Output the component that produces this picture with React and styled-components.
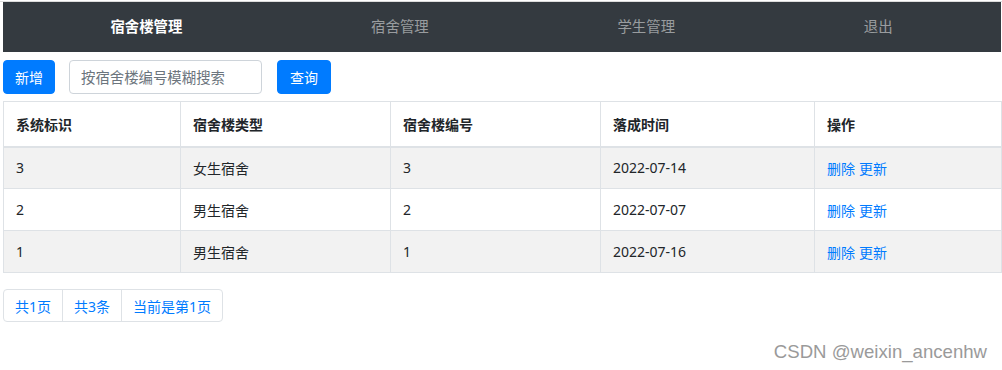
import React from "react";
import styled, { createGlobalStyle } from "styled-components";

const Global = createGlobalStyle`
  html, body { margin: 0; padding: 0; background: #fff; }
  body {
    font-family: "Noto Sans", "Noto Sans CJK SC", sans-serif;
    font-size: 14px;
    color: #212529;
  }
  * { box-sizing: border-box; }
`;

const Page = styled.div`
  position: relative;
  height: 370px;
  margin-top: 1px;
  border-top: 1px solid #dcdcdc;
  padding: 0 1px 0 3px;
`;

const Nav = styled.nav`
  height: 50px;
  background: #343a40;
  display: flex;
  align-items: center;
  justify-content: space-around;
  padding: 0 14px 0 13px;
`;

const NavItem = styled.a`
  font-size: 14.4px;
  line-height: 20px;
  color: ${(p) => (p.$active ? "#ffffff" : "rgba(255,255,255,0.5)")};
  font-weight: ${(p) => (p.$active ? 700 : 400)};
  text-decoration: none;
  white-space: nowrap;
`;

const Toolbar = styled.div`
  display: flex;
  align-items: center;
  margin-top: 8px;
  height: 34px;
`;

const Button = styled.button`
  height: 34px;
  padding: 0 ${(p) => p.$px || 11}px;
  border: 1px solid #007bff;
  background: #007bff;
  color: #fff;
  border-radius: 4px;
  font-family: inherit;
  font-size: 14px;
  margin-left: ${(p) => p.$ml || 0}px;
`;

const SearchInput = styled.input`
  width: 193px;
  height: 34px;
  margin-left: 14px;
  padding: 0 11px;
  border: 1px solid #ced4da;
  border-radius: 4px;
  font-family: inherit;
  font-size: 14.4px;
  color: #495057;
  &::placeholder { color: #6c757d; }
`;

const Table = styled.table`
  width: 998px;
  margin-top: 7px;
  border-collapse: collapse;
  table-layout: fixed;
`;

const Th = styled.th`
  text-align: left;
  font-weight: 700;
  height: 45px;
  padding: 0 12px;
  border: 1px solid #dee2e6;
  border-bottom: 2px solid #dee2e6;
  vertical-align: middle;
  font-size: 14px;
`;

const Tr = styled.tr`
  background: ${(p) => (p.$striped ? "#f2f2f2" : "#fff")};
`;

const Td = styled.td`
  height: 42px;
  padding: 0 12px;
  border: 1px solid #dee2e6;
  vertical-align: middle;
  font-size: 14px;
`;

const Link = styled.a`
  color: #007bff;
  text-decoration: none;
  margin-right: 4px;
`;

const Pager = styled.ul`
  display: inline-flex;
  list-style: none;
  margin: 16px 0 0;
  padding: 0;
`;

const PageItem = styled.li`
  height: 33px;
  padding: 0 11px;
  display: flex;
  align-items: center;
  color: #007bff;
  border: 1px solid #dee2e6;
  margin-left: ${(p) => (p.$first ? 0 : -1)}px;
  border-radius: ${(p) =>
    p.$first ? "4px 0 0 4px" : p.$last ? "0 4px 4px 0" : "0"};
  font-size: 14px;
`;

const Watermark = styled.div`
  position: absolute;
  right: 15px;
  top: 339px;
  font-family: "Liberation Sans", Arial, sans-serif;
  font-size: 18.6px;
  color: #9a9a9a;
  white-space: nowrap;
`;

const rows = [
  { id: 3, type: "女生宿舍", no: 3, date: "2022-07-14" },
  { id: 2, type: "男生宿舍", no: 2, date: "2022-07-07" },
  { id: 1, type: "男生宿舍", no: 1, date: "2022-07-16" },
];

const cols = [177, 210, 210, 214, 187];

export default function App() {
  return (
    <>
      <Global />
      <Page>
        <Nav>
          <NavItem $active>宿舍楼管理</NavItem>
          <NavItem>宿舍管理</NavItem>
          <NavItem>学生管理</NavItem>
          <NavItem>退出</NavItem>
        </Nav>
        <Toolbar>
          <Button>新增</Button>
          <SearchInput placeholder="按宿舍楼编号模糊搜索" />
          <Button $ml={15} $px={12}>查询</Button>
        </Toolbar>
        <Table>
          <colgroup>
            {cols.map((w, i) => (
              <col key={i} style={{ width: w }} />
            ))}
          </colgroup>
          <thead>
            <tr>
              <Th>系统标识</Th>
              <Th>宿舍楼类型</Th>
              <Th>宿舍楼编号</Th>
              <Th>落成时间</Th>
              <Th>操作</Th>
            </tr>
          </thead>
          <tbody>
            {rows.map((r, i) => (
              <Tr key={r.id} $striped={i % 2 === 0}>
                <Td>{r.id}</Td>
                <Td>{r.type}</Td>
                <Td>{r.no}</Td>
                <Td>{r.date}</Td>
                <Td>
                  <Link>删除</Link>
                  <Link>更新</Link>
                </Td>
              </Tr>
            ))}
          </tbody>
        </Table>
        <Pager>
          <PageItem $first>共1页</PageItem>
          <PageItem>共3条</PageItem>
          <PageItem $last>当前是第1页</PageItem>
        </Pager>
        <Watermark>CSDN @weixin_ancenhw</Watermark>
      </Page>
    </>
  );
}
